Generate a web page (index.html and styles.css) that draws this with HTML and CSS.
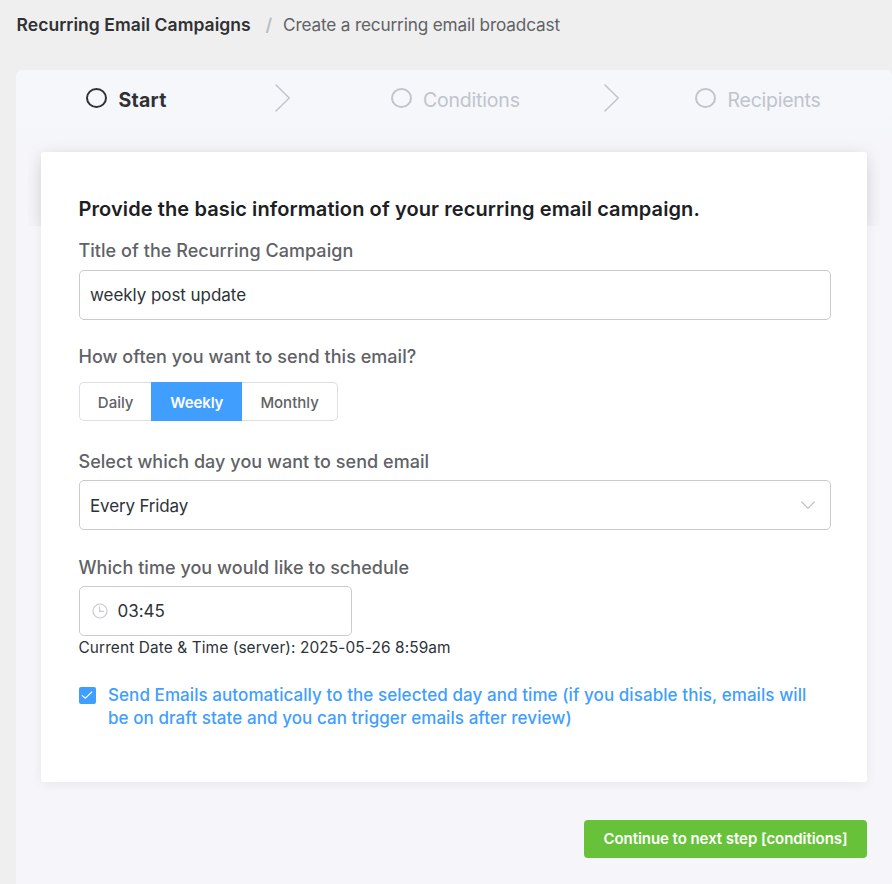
FILE: index.html
```html
<!DOCTYPE html>
<html lang="en">
<head>
<meta charset="utf-8">
<title>Recurring Email Campaigns</title>
<link rel="stylesheet" href="styles.css">
</head>
<body>
<nav class="crumbs">
  <a class="crumb-root">Recurring Email Campaigns</a>
  <span class="crumb-sep">/</span>
  <span class="crumb-here">Create a recurring email broadcast</span>
</nav>
<main class="panel">
  <div class="steps">
    <div class="step active"><i class="dot"></i><span>Start</span></div>
    <svg class="arrow" width="16" height="28" viewBox="0 0 16 28"><path d="M1 1L14.2 14L1 27"/></svg>
    <div class="step step-two"><i class="dot"></i><span>Conditions</span></div>
    <svg class="arrow" width="16" height="28" viewBox="0 0 16 28"><path d="M1 1L14.2 14L1 27"/></svg>
    <div class="step step-three"><i class="dot"></i><span>Recipients</span></div>
  </div>
  <form class="card">
    <h3>Provide the basic information of your recurring email campaign.</h3>
    <div class="field">
      <label>Title of the Recurring Campaign</label>
      <div class="input title">weekly post update</div>
    </div>
    <div class="field often">
      <label>How often you want to send this email?</label>
      <div class="group">
        <div class="opt daily">Daily</div><div class="opt weekly">Weekly</div><div class="opt monthly">Monthly</div>
      </div>
    </div>
    <div class="field">
      <label>Select which day you want to send email</label>
      <div class="input select"><span>Every Friday</span>
        <svg width="14" height="9" viewBox="0 0 14 9"><path d="M.8 1L7 7.4L13.2 1"/></svg>
      </div>
    </div>
    <div class="field time">
      <label>Which time you would like to schedule</label>
      <div class="input short">
        <svg width="16" height="16" viewBox="0 0 16 16"><circle cx="8" cy="8" r="7"/><path d="M7.6 4V8.4H11.4"/></svg>
        <span>03:45</span></div>
      <p class="server">Current Date &amp; Time (server): 2025-05-26 8:59am</p>
    </div>
    <div class="check">
      <span class="box"><svg width="17" height="17" viewBox="0 0 17 17"><path d="M3.2 8.6L6.4 11.2L12.8 5"/></svg></span>
      <p>Send Emails automatically to the selected day and time (if you disable this, emails will<br>be on draft state and you can trigger emails after review)</p>
    </div>
  </form>
  <div class="foot"><button class="next">Continue to next step [conditions]</button></div>
</main>
</body>
</html>
```
FILE: styles.css
```css
* { box-sizing: border-box; }
body {
  margin: 0;
  height: 884px;
  overflow: hidden;
  background: #efefef;
  color: #303133;
  font-family: Inter, "Liberation Sans", sans-serif;
  white-space: nowrap;
}
p, h3 { margin: 0; }
svg { display: block; flex: none; fill: none; stroke-linecap: round; stroke-linejoin: round; }
.crumbs { height: 70px; padding: 13px 0 0 16.5px; display: flex; font-size: 17.5px; line-height: 24px; }
.crumb-root { width: 235px; font-weight: 600; letter-spacing: .05px; color: #303133; }
.crumb-sep { width: 31.5px; padding-left: 3px; text-align: center; font-weight: 600; color: #b9bcc4; }
.crumb-here { font-size: 17.2px; letter-spacing: -.16px; color: #606266; }
.panel {
  margin-left: 16px;
  height: 814px;
  padding: 0 25px;
  border-radius: 6px 6px 0 0;
  background: linear-gradient(#f5f7fb 0, #f5f7fb 40px, #f5f5fa 82px);
}
.steps { height: 82px; display: flex; padding: 14px 0 0 45px; }
.step { display: flex; flex: none; align-items: center; width: 188.5px; height: 31px; font-size: 19.5px; color: #c0c4cc; }
.step-two { margin-left: 100px; width: 213px; letter-spacing: -.2px; }
.step-three { margin-left: 75.5px; width: auto; letter-spacing: -.25px; }
.dot { flex: none; width: 21px; height: 20px; margin: 0 11.5px 2.5px 0; border: 2.5px solid #c0c4cc; border-radius: 50%; }
.active { color: #303133; font-weight: 700; letter-spacing: .25px; }
.active .dot { border-color: #303133; }
.arrow { stroke: #c0c4cc; stroke-width: 1.5; }
.card {
  position: relative;
  z-index: 0;
  width: 826px;
  height: 630px;
  padding: 42px 36px 0 38px;
  background: #fff;
  border-radius: 3px;
  box-shadow: 0 2px 12px rgba(0, 0, 0, .06);
}
.card::before {
  content: "";
  position: absolute;
  z-index: -1;
  inset: 0 0 auto;
  height: 74px;
  border-radius: 3px 3px 0 0;
  box-shadow: 0 6px 22px rgba(0, 0, 0, .1);
  clip-path: inset(-30px -13px 0 -13px);
  background: #fff;
}
h3 { height: 30px; margin-left: -.5px; line-height: 30px; font-size: 20px; font-weight: 600; letter-spacing: .1px; color: #1d2023; }
.field { padding-top: 15px; }
label { display: block; height: 24px; margin-left: -.5px; line-height: 24px; font-size: 18px; font-weight: 500; letter-spacing: .04px; color: #606266; }
.often label { line-height: 25px; }
.input {
  display: flex; align-items: center;
  height: 50px; margin: 7px 0 9px; padding: 0 10px;
  border: 1px solid #c9cbcf; border-radius: 5px;
  font-size: 17px; letter-spacing: -.05px; color: #2c3338;
}
.often { height: 106px; }
.group { display: flex; width: 259px; height: 39px; margin: 14px 0 0 -.5px; font-size: 15px; font-weight: 500; color: #606266; }
.opt { display: flex; align-items: center; justify-content: center; padding: 2px 0 0 1px; border: 1px solid #dcdfe6; }
.daily { width: 72.5px; border-right: 0; border-radius: 5px 0 0 5px; }
.weekly { width: 91px; background: #409eff; border-color: #409eff; color: #fff; font-weight: 600; letter-spacing: -.1px; }
.monthly { width: 96px; border-left: 0; border-radius: 0 5px 5px 0; }
.select { justify-content: space-between; margin: 6px 0 11px; padding: 1px 15px 0 10px; letter-spacing: -.15px; }
.select svg { stroke: #c0c4cc; stroke-width: 1.2; }
.short { width: 273px; margin: 6px 0 0; padding-left: 12px; }
.short svg { margin-right: 9.5px; stroke: #c8cad0; stroke-width: 1.2; }
.server { height: 24px; margin-left: -.5px; line-height: 24px; font-size: 15.4px; letter-spacing: .11px; color: #2c3338; }
.check { display: flex; margin-top: 24px; font-size: 17px; line-height: 23px; font-weight: 500; letter-spacing: .07px; color: #409eff; }
.box { width: 17px; height: 17px; margin: 3px 12px 0 0; background: #409eff; border-radius: 2px; }
.box svg { stroke: #fff; stroke-width: 1.1; }
.foot { display: flex; justify-content: flex-end; padding-top: 38px; width: 826px; }
.next { width: 283px; height: 38px; padding: 0 0 1px; border: 0; border-radius: 4px; background: #67c23a; color: #fff; font: 600 15px Inter, "Liberation Sans", sans-serif; letter-spacing: -.05px; }
```
